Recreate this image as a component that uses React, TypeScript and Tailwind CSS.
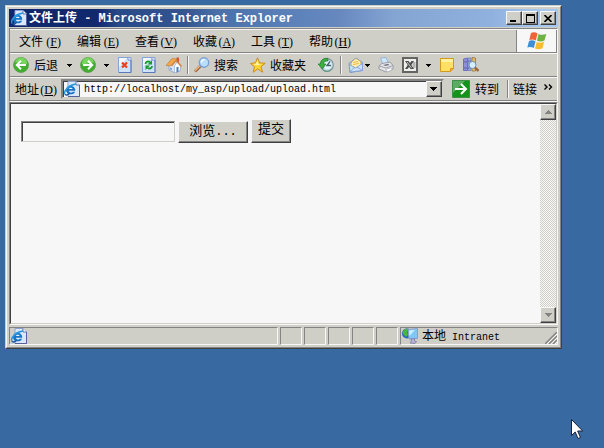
import React from 'react';

const MENU = [
  { label: '文件', accel: 'F' },
  { label: '编辑', accel: 'E' },
  { label: '查看', accel: 'V' },
  { label: '收藏', accel: 'A' },
  { label: '工具', accel: 'T' },
  { label: '帮助', accel: 'H' },
];

const RAISED =
  'bg-[#d0cfc7] border border-t-[#f7f7f7] border-l-[#f7f7f7] border-r-[#404040] border-b-[#404040] shadow-[inset_-1px_-1px_0_#848484]';
const PANE =
  'h-full border border-t-[#848484] border-l-[#848484] border-r-[#f7f7f7] border-b-[#f7f7f7]';

const BrowserIcon: React.FC = () => (
  <svg className="w-4 h-4 shrink-0" viewBox="0 0 16 16" aria-hidden="true">
    <path d="M4 .5h8l3.500 3.500v11.500H4z" fill="#dce8fa" stroke="#8ba2d2" />
    <path d="M12 .5V4h3.500" fill="#fff" stroke="#5f74ad" />
    <path d="M4 15.500h11.500V4" fill="none" stroke="#54629c" />
    <path d="M11.300 9.800H4.800c.4 2 3 2.300 4 .9h2.300C9.500 14.800 2 14 2 9c0-5.700 9.300-6 9.300.8z" fill="#1674c6" />
    <path d="M4.800 7.900h3.900c-.4-1.500-3.300-1.600-3.900 0z" fill="#e4f5ff" />
    <path d="M2.800 8c.4-3 4-4.500 6.200-2.800" fill="none" stroke="#55bdf2" />
    <path d="M1 13.500C-1 10 5.500 3.500 12 3" fill="none" stroke="#2b97df" strokeWidth="1.400" />
    <path d="M1 13.500c1.500 1 3.500 0 4.500-1" fill="none" stroke="#1854a0" strokeWidth="1.300" />
  </svg>
);

const ArrowBall: React.FC<{ back?: boolean }> = ({ back }) => (
  <svg className={`w-4 h-4 shrink-0 ${back ? '-scale-x-100' : ''}`} viewBox="0 0 16 16" aria-hidden="true">
    <circle cx="8" cy="8" r="7.500" fill="#3fae2c" stroke="#5f9b52" strokeWidth=".8" />
    <path d="M2 7a6 6 0 0 1 12-1C10 4 6 9 2 7z" fill="#76d55c" />
    <path d="M3 8h9M8 3.800L12.200 8 8 12.200" fill="none" stroke="#fff" strokeWidth="2" />
  </svg>
);

const StopIcon: React.FC = () => (
  <svg className="w-3.5 h-4 shrink-0" viewBox="0 0 14 16" aria-hidden="true">
    <path d="M.5.5h12.500v15H.5z" fill="#cfe2fa" stroke="#86a2d8" />
    <path d="M1 1h8l-8 9z" fill="#f4f9ff" />
    <path d="M13 3v12.500H1" fill="none" stroke="#5b78b8" />
    <path d="M10 .5V3h3" fill="#fff" stroke="#7694cf" />
    <path d="M4 5.500l5 5M9 5.500l-5 5" stroke="#e8401c" strokeWidth="2.200" />
  </svg>
);

const RefreshIcon: React.FC = () => (
  <svg className="w-3.5 h-4 shrink-0" viewBox="0 0 14 16" aria-hidden="true">
    <path d="M.5.5h12.500v15H.5z" fill="#cfe2fa" stroke="#86a2d8" />
    <path d="M1 1h8l-8 9z" fill="#f4f9ff" />
    <path d="M13 3v12.500H1" fill="none" stroke="#5b78b8" />
    <path d="M10 .5V3h3" fill="#fff" stroke="#7694cf" />
    <path d="M3.500 7C3.500 4.500 6 4 8 5" fill="none" stroke="#159c2b" strokeWidth="1.800" />
    <path d="M10 3v4.500H5.500z" fill="#159c2b" />
    <path d="M10 9c0 2.500-2.500 3-4.500 2" fill="none" stroke="#159c2b" strokeWidth="1.800" />
    <path d="M3.500 13V8.500H8z" fill="#159c2b" />
  </svg>
);

const HomeIcon: React.FC = () => (
  <svg className="w-4 h-4 shrink-0" viewBox="0 0 16 16" aria-hidden="true">
    <path d="M10.500.5H13v5h-2.500z" fill="#c85a32" />
    <path d="M3 8l7-4 4 5v5l-5 2-6-3z" fill="#dbe6f7" stroke="#8c9cc6" strokeWidth=".8" />
    <path d="M8.500 9v7l6-2.500V9L11 5z" fill="#fff" stroke="#8ba2ca" strokeWidth=".6" />
    <path d="M0 8.500L6 1.500l5 .5-6.500 7z" fill="#f3a94b" stroke="#ba7331" strokeWidth=".6" />
    <path d="M10.500 2.500L16 9l-1 1-5-5.500-4 5-1-1z" fill="#d7813b" />
    <path d="M10.500 10h2v4.500l-2 .8z" fill="#4f78b8" />
    <path d="M4 10.500l2 .8v2l-2-.8z" fill="#7ba5dc" />
  </svg>
);

const SearchIcon: React.FC = () => (
  <svg className="w-4 h-4 shrink-0" viewBox="0 0 16 16" aria-hidden="true">
    <path d="M1 14.500L6.500 9" stroke="#a0683f" strokeWidth="3" />
    <path d="M1 13.800l5-5" stroke="#efb47a" strokeWidth="1.300" />
    <circle cx="10" cy="5.500" r="4.700" fill="#b9defa" stroke="#7ba0d7" strokeWidth="1.400" />
    <path d="M7.500 5.500c0-2 1.500-3 3-2.700" fill="none" stroke="#fff" strokeWidth="1.500" />
  </svg>
);

const StarIcon: React.FC = () => (
  <svg className="w-4 h-4 shrink-0" viewBox="0 0 16 16" aria-hidden="true">
    <path d="M7.500.8l2 5 5.700.5-4.300 3.500 1.800 5.400-5-3.200-4.500 3.200 1.300-5.400L.5 6.500l5-.7z" fill="#fbd333" stroke="#cb8d22" />
    <path d="M7.500 3l1 4 3 .5-5 .7-3.500-.9 3-.6z" fill="#fff6a6" />
  </svg>
);

const HistoryIcon: React.FC = () => (
  <svg className="w-4 h-4 shrink-0" viewBox="0 0 16 16" aria-hidden="true">
    <circle cx="9" cy="8" r="6.300" fill="#c3dce6" stroke="#7f979f" strokeWidth="1.200" />
    <circle cx="9.500" cy="8" r="4" fill="#e6f6fb" />
    <path d="M12 4.500L9 8.500h4" fill="none" stroke="#41606e" strokeWidth="1.300" />
    <path d="M10 1.500C6 .5 2.500 3 2.300 7H0l4.500 5L8 7H5.500c.2-2 1.800-3.300 4.500-3z" fill="#3bb03c" stroke="#247735" strokeWidth=".7" />
    <path d="M3.500 11l1 1.500c2.500 2.800 7 2.400 9-.5" fill="none" stroke="#5d9c79" />
  </svg>
);

const MailIcon: React.FC = () => (
  <svg className="w-4 h-4 shrink-0" viewBox="0 0 16 16" aria-hidden="true">
    <path d="M1 6.500L8 1l6.500 4.500v8L2 15.500z" fill="#a9c9f0" stroke="#7592c9" />
    <path d="M3.500 5L8 1.500l4.500 3 .5 4-5 2.500-5-2z" fill="#fff0b4" stroke="#d9ad5b" strokeWidth=".7" />
    <path d="M5 5.500l5-1M5 7.500l6-1" stroke="#f0b840" />
    <path d="M1.500 7.500L7.500 11l7-4.500v7L2 15z" fill="#cbe2fb" stroke="#7f9dd2" strokeWidth=".8" />
    <path d="M2 15l4.500-5M14.500 13.500L9 10" stroke="#7f9dd2" strokeWidth=".8" />
  </svg>
);

const PrintIcon: React.FC = () => (
  <svg className="w-4 h-4 shrink-0" viewBox="0 0 16 16" aria-hidden="true">
    <path d="M2.500 1L8 .5l2.500 6-5.500 1z" fill="#cfe8ff" stroke="#89abda" strokeWidth=".8" />
    <path d="M1 9l3-2.500 8-1.500 3 3.500v3.500L8 15l-7-3z" fill="#e6e6e9" stroke="#898c99" strokeWidth=".8" />
    <path d="M1 9l7 2 7-2.500" fill="none" stroke="#9b9eab" />
    <path d="M5 8l5-1.300L11.500 8l-4 1z" fill="#737984" />
    <path d="M7.500 12.500l5-1.500 2 1.500-5 2.500z" fill="#fff" stroke="#9098aa" strokeWidth=".6" />
  </svg>
);

const SheetIcon: React.FC = () => (
  <svg className="w-4 h-4 shrink-0" viewBox="0 0 16 16" aria-hidden="true">
    <path d="M1 1h14v14H1z" fill="#eeeeea" stroke="#646464" strokeWidth="2" />
    <path d="M3 4h3.500l1.500 2L9.500 4H12L9.300 8l2.700 4H8.500L7 10l-1.500 2H3l2.700-4z" fill="#4c4c4c" />
    <path d="M5 5l4.500 6" stroke="#c8c8c8" />
    <path d="M11 6h2.500M10.500 8h3M11 10h2.500" stroke="#777" />
  </svg>
);

const NoteIcon: React.FC = () => (
  <svg className="w-3.5 h-3.5 shrink-0" viewBox="0 0 14 14" aria-hidden="true">
    <path d="M.5.5h13v10l-3 3H.5z" fill="#ffe063" stroke="#d29a1c" />
    <path d="M1 1h12v3H1z" fill="#fff1a0" />
    <path d="M10.500 13.500v-3h3z" fill="#f2bd32" stroke="#d29a1c" />
  </svg>
);

const ResearchIcon: React.FC = () => (
  <svg className="w-4 h-4 shrink-0" viewBox="0 0 16 16" aria-hidden="true">
    <path d="M.5 2l4-1v12.500h-4z" fill="#8f90d8" stroke="#6f6fbd" />
    <path d="M5 1h3v12.500H5z" fill="#9fb4e9" stroke="#6a79bb" strokeWidth=".8" />
    <path d="M9 .5l3.500.5v13H9z" fill="#e3bd64" stroke="#8f7444" strokeWidth=".8" />
    <path d="M1 5h3.500M5 4h3M5 11h3M1 11h3.500" stroke="#5f62a8" />
    <circle cx="9.500" cy="8" r="3.500" fill="#d6effd" stroke="#6d93bd" />
    <path d="M12 10.500l3.500 3.500" stroke="#9c6334" strokeWidth="2.300" />
  </svg>
);

const FlagIcon: React.FC = () => (
  <svg className="w-5 h-[18px]" viewBox="0 0 20 18" aria-hidden="true">
    <path d="M4 1c2.500-1.300 4.500-.8 6.500.5L8.800 8.500C7 7.300 4.500 7 2.300 8z" fill="#ef6336" />
    <path d="M11.500 2c2.500 1.200 5 1 7.800 0l-1.800 6.500c-2.500 1.300-5 1.300-7.500.2z" fill="#6fb342" />
    <path d="M2 9c2-1 4.700-.8 6.500.5L6.800 16C5 15 2.500 14.500.3 15.500z" fill="#3f8fd8" />
    <path d="M9.700 10c2.300 1.200 5 1 7.500-.2l-1.700 6.500c-2.500 1.300-5.200 1.200-7.500.2z" fill="#f8bd2e" />
  </svg>
);

const GoIcon: React.FC = () => (
  <svg className="w-[18px] h-[18px] shrink-0" viewBox="0 0 18 18" aria-hidden="true">
    <path d="M.5.5h17v17H.5z" fill="#14931a" stroke="#3f8f46" />
    <path d="M1 1h12L1 13z" fill="#5cab62" />
    <path d="M3 9h11M9 4l5 5-5 5" fill="none" stroke="#fff" strokeWidth="2" />
  </svg>
);

const IntranetIcon: React.FC = () => (
  <svg className="w-4 h-4 shrink-0" viewBox="0 0 16 16" aria-hidden="true">
    <circle cx="5" cy="5.500" r="5" fill="#2166c4" />
    <path d="M.5 4c2-4 5-4 6-3L5 4l1 3-2 2-3-3z" fill="#4bb447" />
    <path d="M6 1.500L15.500.5v10L7 11z" fill="#7fc8f6" stroke="#8d9ccc" />
    <path d="M7 2.500l6-.7L7.500 8z" fill="#cbf0ff" />
    <path d="M9 11l3.500-.5v2.500l2 .5-1.500 2-5-.5 1.500-2z" fill="#b9b5d4" stroke="#777baa" strokeWidth=".8" />
  </svg>
);

const Caret: React.FC = () => (
  <svg className="shrink-0" width="5" height="3" viewBox="0 0 5 3" aria-hidden="true">
    <path d="M0 0h5v1H4v1H3v1H2V2H1V1H0z" fill="#000" />
  </svg>
);

const BigCaret: React.FC<{ up?: boolean }> = ({ up }) => (
  <svg className="shrink-0" width="7" height="4" viewBox="0 0 7 4" aria-hidden="true">
    <path d={up ? 'M3 0h1v1h1v1h1v1h1v1H0V3h1V2h1V1h1z' : 'M0 0h7v1H6v1H5v1H4v1H3V3H2V2H1V1H0z'} fill="currentColor" />
  </svg>
);

// Half-width text drawn beside the 12px Chinese glyphs
const Latin: React.FC<{ children: React.ReactNode }> = ({ children }) => (
  <span className="text-[10px] font-['Liberation_Mono',monospace] whitespace-pre">{children}</span>
);

const Accel: React.FC<{ letter: string }> = ({ letter }) => (
  <span className="inline-block w-[18px] text-right font-['Liberation_Serif',serif]">
    (<u>{letter}</u>)
  </span>
);

const Separator: React.FC<{ className?: string }> = ({ className = '' }) => (
  <span className={`h-[18px] w-0.5 shrink-0 border-l border-l-[#848484] border-r border-r-[#f7f7f7] ${className}`} />
);

const TitleBar: React.FC = () => (
  <header className="flex items-center h-[18px] px-0.5 mb-px text-white font-bold bg-[linear-gradient(to_right,#10276d_0%,#12286d_16%,#294a88_20%,#335590_32%,#4a70aa_38%,#5a80b9_50%,#6688bf_60%,#84a4d2_70%,#90b0de_88%,#a6c8ee_96%)]">
    <BrowserIcon />
    <h1 className="ml-0.5 grow whitespace-pre">
      文件上传<span className="font-['Liberation_Mono',monospace]">{' - Microsoft Internet Explorer'}</span>
    </h1>
    <button aria-label="最小化" className={`w-4 h-3.5 flex items-end pl-[3px] pb-0.5 ${RAISED}`}>
      <span className="w-1.5 h-0.5 bg-black" />
    </button>
    <button aria-label="最大化" className={`w-4 h-3.5 flex items-center justify-center ${RAISED}`}>
      <span className="w-[9px] h-[9px] border border-t-2 border-black" />
    </button>
    <button aria-label="关闭" className={`w-4 h-3.5 ml-0.5 flex items-center justify-center ${RAISED}`}>
      <svg width="8" height="7" viewBox="0 0 8 7" aria-hidden="true">
        <path d="M.5 0l7 7M7.500 0l-7 7" stroke="#000" strokeWidth="1.600" />
      </svg>
    </button>
  </header>
);

const MenuBar: React.FC = () => (
  <nav className="flex h-6 border-t border-t-[#f7f7f7] border-b border-b-[#848484]">
    <div className="flex items-center grow gap-4 pl-[9px]">
      {MENU.map((item) => (
        <button key={item.accel} className="whitespace-nowrap">
          {item.label}
          <Accel letter={item.accel} />
        </button>
      ))}
    </div>
    <div className="w-[41px] flex items-center justify-center border-l border-l-[#848484] border-r border-r-[#848484] bg-[#f7f7f7]">
      <FlagIcon />
    </div>
  </nav>
);

const ToolBar: React.FC = () => (
  <div role="toolbar" aria-label="工具栏" className="flex items-center h-6 pl-[3px] border-t border-t-[#f7f7f7] border-b border-b-[#848484] whitespace-nowrap">
    <button className="flex items-center gap-[5px]">
      <ArrowBall back />
      后退
    </button>
    <button aria-label="后退历史" className="ml-[9px]">
      <Caret />
    </button>
    <button aria-label="前进" className="ml-2">
      <ArrowBall />
    </button>
    <button aria-label="前进历史" className="ml-2">
      <Caret />
    </button>
    <button aria-label="停止" className="ml-[9px]">
      <StopIcon />
    </button>
    <button aria-label="刷新" className="ml-2.5">
      <RefreshIcon />
    </button>
    <button aria-label="主页" className="ml-2.5">
      <HomeIcon />
    </button>
    <Separator className="ml-[5px]" />
    <button className="flex items-center gap-1 ml-[5px]">
      <SearchIcon />
      搜索
    </button>
    <button className="flex items-center gap-1 ml-3">
      <StarIcon />
      收藏夹
    </button>
    <button aria-label="历史" className="ml-3">
      <HistoryIcon />
    </button>
    <Separator className="ml-1.5" />
    <button aria-label="邮件" className="flex items-center gap-px ml-1.5">
      <MailIcon />
      <Caret />
    </button>
    <button aria-label="打印" className="ml-2">
      <PrintIcon />
    </button>
    <button aria-label="编辑" className="ml-2">
      <SheetIcon />
    </button>
    <button aria-label="编辑选项" className="ml-2">
      <Caret />
    </button>
    <button aria-label="讨论" className="ml-[9px]">
      <NoteIcon />
    </button>
    <button aria-label="信息检索" className="ml-[9px]">
      <ResearchIcon />
    </button>
  </div>
);

const AddressBar: React.FC = () => (
  <div className="flex items-center h-6 pl-[5px] border-t border-t-[#f7f7f7] border-b border-b-[#848484] whitespace-nowrap">
    <label htmlFor="address">
      地址
      <Accel letter="D" />
    </label>
    <div className="flex items-center grow h-5 ml-1 pl-px bg-[#f7f7f7] border-2 border-t-[#848484] border-l-[#848484] border-r-[#d0cfc7] border-b-[#d0cfc7] shadow-[inset_1px_1px_0_#404040]">
      <BrowserIcon />
      <input
        id="address"
        type="text"
        defaultValue="http://localhost/my_asp/upload/upload.html"
        className="grow min-w-0 h-4 pt-0.5 ml-1 bg-transparent outline-none text-[10px] font-['Liberation_Mono',monospace]"
      />
      <button aria-label="地址列表" className={`w-4 h-full flex items-center justify-center ${RAISED}`}>
        <BigCaret />
      </button>
    </div>
    <button className="flex items-center gap-[5px] ml-2">
      <GoIcon />
      转到
    </button>
    <Separator className="ml-2" />
    <button className="ml-1">链接</button>
    <button aria-label="更多链接" className="self-start mt-1.5 ml-[7px] mr-1">
      <svg width="9" height="6" viewBox="0 0 9 6" aria-hidden="true">
        <path d="M.5.500L3 3 .5 5.500M5 .500L7.500 3 5 5.500" fill="none" stroke="#000" strokeWidth="1.400" />
      </svg>
    </button>
  </div>
);

const Page: React.FC = () => (
  <div className="flex grow border border-t-[#848484] border-l-[#848484] border-r-[#f7f7f7] border-b-[#f7f7f7]">
    <main className="flex grow bg-[#f7f7f7] border border-t-[#404040] border-l-[#404040] border-r-[#d0cfc7] border-b-[#d0cfc7]">
      <form className="flex items-end grow self-start pl-2.5 pt-[15px] text-[13px]" onSubmit={(e) => e.preventDefault()}>
        <input
          type="text"
          aria-label="文件路径"
          className="w-[154px] h-[21px] mb-px px-1 outline-none bg-[#f7f7f7] border border-t-[#848484] border-l-[#848484] border-r-[#d0cfc7] border-b-[#d0cfc7] shadow-[inset_1px_1px_0_#404040]"
        />
        <button type="button" className={`w-[70px] h-[22px] ml-[3px] pb-0.5 leading-4 ${RAISED}`}>
          浏览<span className="text-xs font-['Liberation_Mono',monospace]">...</span>
        </button>
        <button type="submit" className={`w-10 h-6 ml-[3px] pb-1.5 leading-4 ${RAISED}`}>
          提交
        </button>
      </form>
      <div className="flex flex-col justify-between w-4 bg-[repeating-conic-gradient(#f7f7f7_0_25%,#d0cfc7_0_50%)] bg-size-[2px_2px] text-[#848484]">
        <button aria-label="向上滚动" className={`h-4 flex items-center justify-center ${RAISED}`}>
          <BigCaret up />
        </button>
        <button aria-label="向下滚动" className={`h-4 flex items-center justify-center ${RAISED}`}>
          <BigCaret />
        </button>
      </div>
    </main>
  </div>
);

const StatusBar: React.FC = () => (
  <footer className="flex gap-0.5 h-[18px] mt-0.5">
    <div className={`grow flex items-center pl-px ${PANE}`}>
      <BrowserIcon />
    </div>
    {[0, 1, 2, 3, 4].map((pane) => (
      <div key={pane} className={`w-[22px] ${PANE}`} />
    ))}
    <div className={`flex items-center gap-1 w-[158px] pl-px whitespace-nowrap ${PANE}`}>
      <IntranetIcon />
      <span className="grow">
        本地<Latin> Intranet</Latin>
      </span>
      <svg className="self-end" width="12" height="12" viewBox="0 0 12 12" aria-hidden="true">
        <path d="M0 12L12 0M4 12l8-8M8 12l4-4" stroke="#848484" strokeWidth="1.500" />
        <path d="M2 12L12 2M6 12l6-6M10 12l2-2" stroke="#f7f7f7" />
      </svg>
    </div>
  </footer>
);

export default function App() {
  return (
    <div className="relative flex h-screen bg-[#3869a0] pt-[5px] pl-[5px] pr-[42px] pb-[99px] text-xs leading-4 text-black font-['Noto_Sans_CJK_SC',sans-serif]">
      <div className="flex grow min-w-0 border border-t-[#d0cfc7] border-l-[#d0cfc7] border-r-[#404040] border-b-[#404040]">
        <div className="flex flex-col grow min-w-0 p-0.5 bg-[#d0cfc7] border border-t-[#f7f7f7] border-l-[#f7f7f7] border-r-[#848484] border-b-[#848484]">
          <TitleBar />
          <div className="border border-t-[#848484] border-l-[#848484] border-r-[#f7f7f7] border-b-[#f7f7f7]">
            <MenuBar />
            <ToolBar />
            <AddressBar />
          </div>
          <Page />
          <StatusBar />
        </div>
      </div>
      <svg className="absolute right-5 bottom-2" width="13" height="21" viewBox="0 0 13 21" aria-hidden="true">
        <path d="M.5.5v16l3.700-3.500 2.800 6.500 2.500-1-2.800-6.500h5z" fill="#fff" stroke="#17233c" />
      </svg>
    </div>
  );
}
